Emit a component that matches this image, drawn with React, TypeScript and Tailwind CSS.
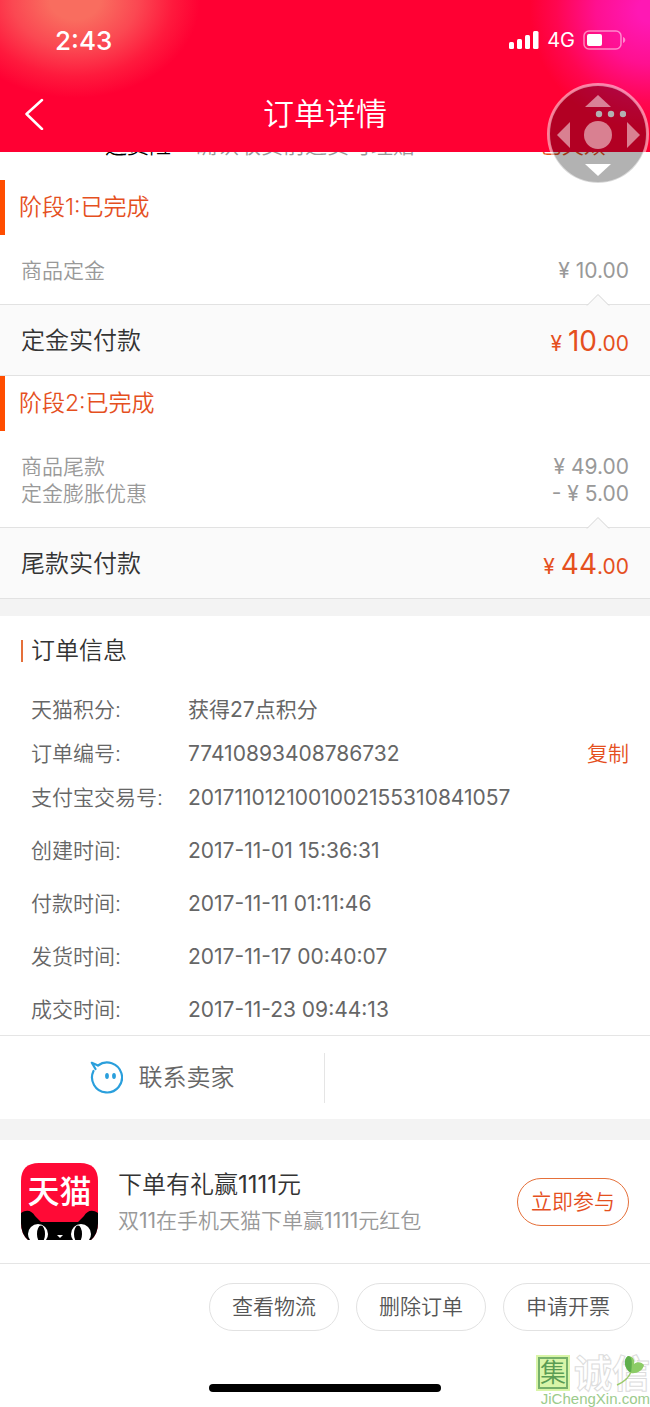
import { ReactNode } from "react";

type Line = { label: string; value: string };

const stages = [
  {
    title: "阶段1:已完成",
    lines: [{ label: "商品定金", value: "¥ 10.00" }],
    total: { label: "定金实付款", yuan: "10", cents: ".00" },
  },
  {
    title: "阶段2:已完成",
    lines: [
      { label: "商品尾款", value: "¥ 49.00" },
      { label: "定金膨胀优惠", value: "- ¥ 5.00" },
    ],
    total: { label: "尾款实付款", yuan: "44", cents: ".00" },
  },
];

const ids: Line[] = [
  { label: "天猫积分:", value: "获得27点积分" },
  { label: "订单编号:", value: "77410893408786732" },
  { label: "支付宝交易号:", value: "2017110121001002155310841057" },
];

const times: Line[] = [
  { label: "创建时间:", value: "2017-11-01 15:36:31" },
  { label: "付款时间:", value: "2017-11-11 01:11:46" },
  { label: "发货时间:", value: "2017-11-17 00:40:07" },
  { label: "成交时间:", value: "2017-11-23 09:44:13" },
];

function Header() {
  return (
    <header className="relative z-10 bg-[#ff0033] bg-[radial-gradient(ellipse_125px_98px_at_75px_0px,#f96d5f_20%,#fb4852_50%,#fe1a3d_78%,#ff003300_100%),radial-gradient(circle_120px_at_100%_10px,#ff18b4_10%,#ff1090_45%,#ff0650_78%,#ff003300_100%)] text-white">
      <div className="flex h-20 items-center justify-between pr-6 pl-[55px]">
        <span className="text-[26px] font-medium">2:43</span>
        <div className="flex items-center gap-2">
          <svg width="30" height="18" viewBox="0 0 30 18" fill="currentColor">
            <rect x="0" y="11" width="5" height="7" rx="1.5" />
            <rect x="8" y="8" width="5" height="10" rx="1.5" />
            <rect x="16" y="4" width="5" height="14" rx="1.5" />
            <rect x="24" y="0" width="5.5" height="18" rx="1.5" />
          </svg>
          <span className="text-xl font-normal">4G</span>
          <svg width="43" height="20" viewBox="0 0 43 20" fill="currentColor">
            <rect x="1" y="1" width="37" height="18" rx="5" fill="none" stroke="#fff" strokeOpacity=".5" strokeWidth="1.5" />
            <rect x="4" y="4" width="15" height="12" rx="2" />
            <path d="M40 7c3 1 3 5 0 6z" fillOpacity=".5" />
          </svg>
        </div>
      </div>
      <div className="grid h-[72px] grid-cols-[1fr_auto_1fr] items-center px-6 pb-1">
        <button aria-label="返回" className="justify-self-start">
          <svg width="20" height="32" viewBox="0 0 20 32" fill="none" stroke="currentColor" strokeWidth="2.5" strokeLinecap="round" strokeLinejoin="round">
            <path d="M18 2 2.5 16 18 31" />
          </svg>
        </button>
        <h1 className="text-[31px]">订单详情</h1>
        <button aria-label="更多" className="justify-self-end">
          <svg width="31" height="8" viewBox="0 0 31 8" fill="currentColor">
            <circle cx="4" cy="4" r="3.2" />
            <circle cx="16" cy="4" r="3.2" />
            <circle cx="28" cy="4" r="3.2" />
          </svg>
        </button>
      </div>
    </header>
  );
}

// floating assistive pad, sits over the header edge
function TouchPad() {
  return (
    <svg className="absolute top-[83px] right-0 z-20" width="104" height="102" viewBox="0 0 104 102">
      <circle cx="52" cy="51" r="49" fill="#000" fillOpacity=".3" />
      <circle cx="52" cy="51" r="49.5" fill="none" stroke="#fff" strokeOpacity=".5" strokeWidth="3" />
      <g fill="#fff" fillOpacity=".5">
        <circle cx="52" cy="52" r="14" />
        <path d="M52 12 65 24H39z" />
        <path d="M11 52 24 39v26z" />
        <path d="M94 52 81 39v26z" />
      </g>
      <path d="M52 93 65 81H39z" fill="#fff" />
    </svg>
  );
}

function Stage({ stage }: { stage: (typeof stages)[number] }) {
  return (
    <section>
      <h2 className="flex h-[55px] items-center border-l-[5px] border-[#ff4d00] pl-[14px] text-[23px] text-[#e5501e]">
        {stage.title}
      </h2>
      <dl className="px-[21px] pt-[22px] pb-5 text-[21px] leading-[27px] text-[#999]">
        {stage.lines.map((line) => (
          <div key={line.label} className="flex justify-between">
            <dt>{line.label}</dt>
            <dd className="font-normal">{line.value}</dd>
          </div>
        ))}
      </dl>
      <div className="relative flex h-[72px] items-center justify-between border-y border-[#e2e2e2] bg-[#fafafa] px-[21px] pt-[2px]">
        <svg className="absolute -top-3 right-10" width="24" height="13" viewBox="0 0 24 13">
          <path d="M1 12.5 12 1.5 23 12.5" fill="#fafafa" stroke="#d4d4d4" />
        </svg>
        <span className="text-2xl text-[#333]">{stage.total.label}</span>
        <span className="text-[21px] font-normal text-[#e5501e]">
          ¥ <span className="text-[28px]">{stage.total.yuan}</span>
          {stage.total.cents}
        </span>
      </div>
    </section>
  );
}

function InfoRow({ line, children }: { line: Line; children?: ReactNode }) {
  return (
    <div className="flex items-center">
      <dt className="w-[157px]">{line.label}</dt>
      <dd className="flex flex-1 items-center justify-between font-normal">
        {line.value}
        {children}
      </dd>
    </div>
  );
}

function TmallLogo() {
  return (
    <svg width="77" height="77" viewBox="0 0 77 77" className="shrink-0">
      <clipPath id="tile">
        <path d="M18 0H59Q77 0 77 18V60Q77 71 70 77H7Q0 71 0 60V18Q0 0 18 0z" />
      </clipPath>
      <g clipPath="url(#tile)">
        <rect width="77" height="77" fill="#ff0a36" />
        <path d="M0 50C6 46 11 48 14 53L20 59H57L63 53C66 48 71 46 77 50V77H0z" fill="#000" />
        <ellipse cx="17" cy="71" rx="10" ry="10" fill="#fff" />
        <ellipse cx="60" cy="71" rx="10" ry="10" fill="#fff" />
        <ellipse cx="20" cy="71" rx="4" ry="8.5" fill="#000" />
        <ellipse cx="57" cy="71" rx="4" ry="8.5" fill="#000" />
        <path d="M36 72h6l-3 3z" fill="#fff" />
      </g>
      <text x="38.500" y="40" textAnchor="middle" fill="#fff" className="text-[32px] font-medium">
        天猫
      </text>
    </svg>
  );
}

function Watermark() {
  return (
    <div className="absolute right-0 bottom-0 flex flex-col items-end text-[#9ccb8c]">
      <div className="flex items-center gap-1">
        <span className="bg-[#d9f5a8] p-[2px]">
          <span className="block border-2 border-[#76b06a] text-[26px] leading-7 text-[#5a9c54]">集</span>
        </span>
        <span className="relative text-[38px] leading-9 font-bold text-white [-webkit-text-stroke:1px_#dcdcdc]">
          诚信
          <svg className="absolute top-0 right-1" width="30" height="32" viewBox="0 0 30 32">
            <path d="M15 18C8 14 7 4 12 1c5 0 7 4 6 8 3-3 8-2 10 1-1 6-8 9-13 8z" fill="#8ccc66" />
            <path d="M15 18C8 14 7 4 12 1c5 0 4 9 3 17z" fill="#5fae4c" />
            <path d="M15 17C13 22 8 27 1 30" fill="none" stroke="#9ccb6c" strokeWidth="1.5" />
          </svg>
        </span>
      </div>
      <span className="font-['Liberation_Sans',sans-serif] text-[15px] leading-4 font-normal">JiChengXin.com</span>
    </div>
  );
}

export default function App() {
  return (
    <main className="relative min-h-screen bg-white font-[Inter,'Noto_Sans_CJK_SC',sans-serif] font-[350]">
      <Header />
      <TouchPad />
      <div className="-mt-6 flex h-[52px] items-start pr-[30px] pl-[105px] text-[22px] leading-[34px]">
        <span className="text-black">运费险</span>
        <span className="ml-6 text-[#999]">确认收货前退货可理赔</span>
        <span className="ml-auto text-[#e5501e]">已失效 ›</span>
      </div>
      {stages.map((stage) => (
        <Stage key={stage.title} stage={stage} />
      ))}

      <div className="h-[17px] bg-[#f3f3f3]" />
      <section className="px-[21px] pt-5 pb-[11px]">
        <h2 className="flex h-[30px] items-center gap-2 text-2xl text-[#333]">
          <span className="h-[22px] w-[2px] bg-[#e5703a]" />
          订单信息
        </h2>
        <dl className="mt-[30px] flex flex-col gap-4 pl-[10px] text-[21px] leading-7 text-[#666]">
          {ids.map((line) => (
            <InfoRow key={line.label} line={line}>
              {line.label === "订单编号:" && <button className="font-[350] text-[#e5501e]">复制</button>}
            </InfoRow>
          ))}
        </dl>
        <dl className="mt-[25px] flex flex-col gap-[25px] pl-[10px] text-[21px] leading-7 text-[#666]">
          {times.map((line) => (
            <InfoRow key={line.label} line={line} />
          ))}
        </dl>
      </section>

      <div className="flex h-[84px] items-center border-t border-[#e5e5e5]">
        <button className="flex h-[50px] w-1/2 items-center justify-center gap-4 border-r border-[#e5e5e5] text-2xl text-[#666]">
          <svg width="33" height="34" viewBox="0 0 33 34" fill="none" stroke="#2a9fdc" strokeWidth="2.2" strokeLinejoin="round" strokeLinecap="round">
            <path d="M5.500 8 1.800 1.800 8 4.500M8 4.500A15 15 0 1 1 3.500 10" />
            <g fill="#2a9fdc" stroke="none">
              <ellipse cx="17" cy="15" rx="1.900" ry="3" />
              <ellipse cx="24" cy="15" rx="1.900" ry="3" />
            </g>
          </svg>
          联系卖家
        </button>
      </div>
      <div className="h-[21px] bg-[#f3f3f3]" />

      <section className="flex h-[124px] items-center border-b border-[#e5e5e5] px-[21px]">
        <TmallLogo />
        <div className="ml-5 flex-1 pt-[2px]">
          <h3 className="text-2xl leading-9 text-[#333]">下单有礼赢<span className="font-normal">1111</span>元</h3>
          <p className="text-[21px] leading-9 text-[#999]">
            双<span className="font-normal">11</span>在手机天猫下单赢<span className="font-normal">1111</span>元红包
          </p>
        </div>
        <button className="h-12 rounded-full border border-[#e5703a] px-[13px] text-[21px] text-[#e5501e]">立即参与</button>
      </section>

      <footer className="flex flex-col items-center pb-[15px]">
        <div className="flex gap-[17px] self-end pt-[19px] pr-[17px] pb-5 text-[21px] text-[#555]">
          {["查看物流", "删除订单", "申请开票"].map((label) => (
            <button key={label} className="h-12 w-[130px] rounded-full border border-[#e2e2e2]">
              {label}
            </button>
          ))}
        </div>
        <div className="mt-[33px] h-2 w-[232px] rounded-full bg-black" />
      </footer>
      <Watermark />
    </main>
  );
}
